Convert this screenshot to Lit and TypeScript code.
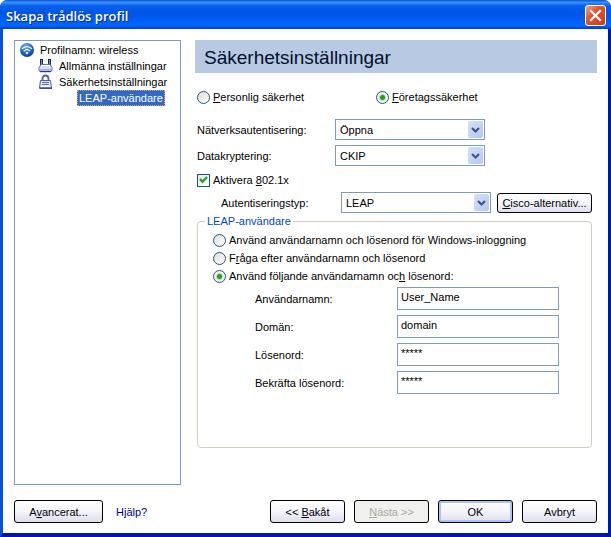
import { LitElement, html, css, svg } from "lit";
import { customElement, property, state } from "lit/decorators.js";

const globeIcon = html`<svg class="icon" viewBox="0 0 16 16" width="16" height="16" aria-hidden="true">
  <defs>
    <radialGradient id="globe" cx="0.4" cy="0.25" r="0.8">
      <stop offset="0" stop-color="#6fb0f0" />
      <stop offset="0.55" stop-color="#2468c8" />
      <stop offset="1" stop-color="#10388c" />
    </radialGradient>
  </defs>
  <circle cx="7" cy="8" r="7" fill="url(#globe)" />
  <g fill="none" stroke="#e4f0fc" stroke-width="1.3" stroke-linecap="round">
    <path d="M2.400 6.600Q7 2.600 11.600 6.600" />
    <path d="M4.200 8.900Q7 6.200 9.800 8.900" />
  </g>
  <circle cx="7" cy="11" r="1.300" fill="#e4f0fc" />
</svg>`;

const adapterIcon = html`<svg class="icon" viewBox="0 0 16 16" width="16" height="16" aria-hidden="true">
  <path d="M3.500 1v6M11.500 1v6" stroke="#1c2560" stroke-width="3" />
  <path d="M3.500 2v5M11.500 2v5" stroke="#7c88d0" stroke-width="1" />
  <path d="M3 6.500h9l2 3v2.500q0 1.500-1.500 1.500h-10Q1 13.500 1 12V9.500z" fill="#d8def6" stroke="#6470b8" />
  <path d="M3 7.500h9" stroke="#fff" />
  <path d="M2 11.500h11" stroke="#a4b0e4" />
  <path d="M2 13.500h11" stroke="#2c3880" stroke-width="1.400" />
</svg>`;

const lockIcon = html`<svg class="icon" viewBox="0 0 16 16" width="16" height="16" aria-hidden="true">
  <path d="M4.500 7V5Q4.500 1.500 7.500 1.500T10.500 5V7" fill="none" stroke="#5562a8" stroke-width="1.800" />
  <path d="M2.500 6.500h10l1 7.500h-12z" fill="#e6ebfb" stroke="#4c5cb0" />
  <path d="M4 8.500h7M4 10.500h7" stroke="#5a68b0" />
  <path d="M3 12.500h9" stroke="#fff" />
  <path d="M1.500 14.200h12.500" stroke="#303c8c" stroke-width="1.300" />
</svg>`;

const closeIcon = html`<svg viewBox="0 0 19 19" width="19" height="19" aria-hidden="true">
  <path d="M5 5l9 9M14 5l-9 9" stroke="#fff" stroke-width="2.200" stroke-linecap="square" />
</svg>`;

/** Text with one underlined access key, written as "_" before the letter. */
function mnemonic(text: string) {
  const at = text.indexOf("_");
  if (at < 0) return html`${text}`;
  return html`<span>${text.slice(0, at)}<u>${text[at + 1]}</u>${text.slice(at + 2)}</span>`;
}

@customElement("xp-select")
export class XpSelect extends LitElement {
  @property() label = "";
  @property({ type: Array }) options: string[] = [];

  static styles = css`
    :host { display: block; position: relative; }
    select {
      appearance: none;
      display: block;
      box-sizing: border-box;
      width: 100%;
      height: 21px;
      margin: 0;
      padding: 0 20px 0 4px;
      border: 1px solid #7f9db9;
      border-radius: 0;
      background: #fff;
      color: #000;
      font: inherit;
      outline: none;
    }
    .arrow {
      position: absolute;
      top: 2px;
      right: 2px;
      width: 15px;
      height: 17px;
      border-radius: 2px;
      background: linear-gradient(135deg, #d5e1fb, #b2c8f5);
      pointer-events: none;
    }
    svg { display: block; }
  `;

  render() {
    return html`<select aria-label=${this.label}>
        ${this.options.map((o) => html`<option>${o}</option>`)}
      </select>
      <span class="arrow">
        <svg viewBox="0 0 15 17" width="15" height="17" aria-hidden="true">
          ${svg`<path d="M4 7l3.500 3.500L11 7" fill="none" stroke="#40567f" stroke-width="2.200" />`}
        </svg>
      </span>`;
  }
}

@customElement("app-root")
export class AppRoot extends LitElement {
  @state() private security = "enterprise";
  @state() private login = "fixed";

  static styles = css`
    :host {
      display: block;
      color: #000;
      font: 11px/16px "Liberation Sans", Arial, sans-serif;
    }
    * { box-sizing: border-box; }
    .window {
      display: flex;
      flex-direction: column;
      min-height: 100vh;
      background: #fff;
      border: solid;
      border-width: 0 3px 4px;
      border-color: #0a2fc4 #0019a8 #0019a8 #0a50e0;
      border-radius: 8px 8px 0 0;
    }
    .titlebar {
      display: flex;
      align-items: center;
      justify-content: space-between;
      height: 29px;
      margin: 0 -3px;
      padding: 2px 5px 0 6px;
      border-radius: 7px 7px 0 0;
      background: linear-gradient(#0a4fd0, #3a90ff 8%, #0560ee 20%, #0054e3 45%, #0060f8 75%, #0466ff 88%, #003dd0);
    }
    .titlebar h1 {
      margin: 0;
      color: #fff;
      font: 600 13px/20px "Open Sans", "Noto Sans", sans-serif;
      text-shadow: 1px 1px 0 #0a2a8c;
    }
    .close {
      width: 21px;
      height: 21px;
      padding: 0;
      border: 1px solid #fff;
      border-radius: 3px;
      background: linear-gradient(135deg, #f0a088, #e2552c 40%, #c83c14);
    }
    .close svg { display: block; }
    .body {
      flex: 1;
      display: flex;
      gap: 14px;
      padding: 11px 11px 0;
    }
    .tree {
      flex: 0 0 167px;
      border: 1px solid #7f9db9;
      padding: 1px 0 0 5px;
      margin: 0;
      list-style: none;
    }
    .tree li {
      display: flex;
      align-items: center;
      gap: 4px;
      height: 16px;
      white-space: nowrap;
    }
    .tree .level1 { padding-left: 18px; gap: 5px; }
    .level2 { padding-left: 57px; }
    .selected {
      padding: 0 2px;
      outline: 1px dotted #d8a060;
      outline-offset: -1px;
      background: #316ac5;
      color: #fff;
    }
    .icon { flex: none; display: block; }
    .main { flex: 1; min-width: 0; }
    .banner {
      margin: 0;
      height: 33px;
      padding-left: 9px;
      background: #b8c9e3;
      color: #00102c;
      font: 19px/35px "Liberation Sans", Arial, sans-serif;
    }
    .form { padding: 0 5px 0 2px; }
    .choices {
      display: grid;
      grid-template-columns: 179px 1fr;
      padding-top: 16px;
    }
    label { display: flex; align-items: center; white-space: nowrap; }
    input { margin: 0; outline: none; }
    input[type="radio"] {
      appearance: none;
      flex: none;
      width: 13px;
      height: 13px;
      margin-right: 3px;
      border: 1px solid #2a5582;
      border-radius: 50%;
      background: linear-gradient(135deg, #dcdcd7, #fff);
    }
    input[type="radio"]:checked {
      background: radial-gradient(circle, #21a121 0 2px, #b8e0b4 3px, #f4f4f2 4px);
    }
    .tick { position: relative; margin-top: 6px; height: 16px; }
    .tick input {
      appearance: none;
      width: 13px;
      height: 13px;
      margin-right: 3px;
      border: 1px solid #1c5180;
      background: linear-gradient(135deg, #e6e6e2, #fff);
    }
    .tick svg { position: absolute; left: 0; top: 1px; pointer-events: none; }
    .field {
      display: grid;
      grid-template-columns: 138px 150px;
      align-items: center;
    }
    .first { margin-top: 14px; }
    .next { margin-top: 5px; }
    .auth {
      display: grid;
      grid-template-columns: 120px 150px 1fr;
      align-items: center;
      margin-top: 4px;
      padding-left: 24px;
    }
    button { font: inherit; color: #000; }
    .btn {
      height: 23px;
      padding: 0;
      border: 1px solid #000;
      border-radius: 3px;
      background: linear-gradient(#fff, #f4f4fb 50%, #dedeee);
      white-space: nowrap;
    }
    .cisco { height: 20px; margin-left: 6px; }
    fieldset {
      min-width: 0;
      height: 235px;
      margin: 0;
      padding: 2px 0 0 15px;
      border: 1px solid #d0d0bf;
      border-radius: 4px;
    }
    legend {
      margin-left: -8px;
      padding: 0 2px;
      color: #0046d5;
    }
    fieldset > label { height: 18px; }
    .credentials {
      display: grid;
      grid-template-columns: 142px 162px;
      row-gap: 5px;
      padding: 2px 0 0 42px;
    }
    .credentials input {
      width: 100%;
      height: 23px;
      padding: 0 3px 3px;
      border: 1px solid #7f9db9;
      background: #fff;
      color: #000;
      font: inherit;
    }
    .footer {
      display: grid;
      grid-template-columns: 89px 1fr repeat(4, 75px);
      column-gap: 9px;
      align-items: center;
      padding: 15px 11px 10px;
    }
    .footer a { margin-left: 4px; color: #0000a0; text-decoration: none; }
    .footer .btn:disabled {
      background: #f0f0ee;
      color: #a8a899;
      border-color: #000;
    }
    .footer .default { box-shadow: inset 0 0 0 2px #a9c4f5; }
  `;

  private loginRadio(value: string, text: string) {
    return html`<label>
      <input type="radio" name="login" .checked=${this.login === value}
        @change=${() => (this.login = value)} />${mnemonic(text)}
    </label>`;
  }

  private credential(id: string, label: string, value: string) {
    return html`<label for=${id}>${label}</label><input id=${id} type="text" .value=${value} />`;
  }

  render() {
    return html`<div class="window">
      <header class="titlebar">
        <h1>Skapa trådlös profil</h1>
        <button class="close" aria-label="Stäng">${closeIcon}</button>
      </header>
      <div class="body">
        <ul class="tree">
          <li>${globeIcon}Profilnamn: wireless</li>
          <li class="level1">${adapterIcon}Allmänna inställningar</li>
          <li class="level1">${lockIcon}Säkerhetsinställningar</li>
          <li class="level2"><span class="selected">LEAP-användare</span></li>
        </ul>
        <main class="main">
          <h2 class="banner">Säkerhetsinställningar</h2>
          <div class="form">
            <div class="choices">
              <label><input type="radio" name="security" .checked=${this.security === "personal"}
                @change=${() => (this.security = "personal")} />${mnemonic("_Personlig säkerhet")}</label>
              <label><input type="radio" name="security" .checked=${this.security === "enterprise"}
                @change=${() => (this.security = "enterprise")} />${mnemonic("_Företagssäkerhet")}</label>
            </div>
            <div class="field first">
              <span>Nätverksautentisering:</span>
              <xp-select label="Nätverksautentisering" .options=${["Öppna"]}></xp-select>
            </div>
            <div class="field next">
              <span>Datakryptering:</span>
              <xp-select label="Datakryptering" .options=${["CKIP"]}></xp-select>
            </div>
            <label class="tick">
              <input type="checkbox" checked />
              <svg viewBox="0 0 13 13" width="13" height="13" aria-hidden="true">
                <path d="M3 6l2.500 2.800L10 4" fill="none" stroke="#21a121" stroke-width="2.200" />
              </svg>
              ${mnemonic("Aktivera _802.1x")}
            </label>
            <div class="auth">
              <span>Autentiseringstyp:</span>
              <xp-select label="Autentiseringstyp" .options=${["LEAP"]}></xp-select>
              <button class="btn cisco">${mnemonic("_Cisco-alternativ...")}</button>
            </div>
            <fieldset>
              <legend>LEAP-användare</legend>
              ${this.loginRadio("windows", "Använd användarnamn och lösenord för Windows-inloggning")}
              ${this.loginRadio("prompt", "F_råga efter användarnamn och lösenord")}
              ${this.loginRadio("fixed", "Använd följande användarnamn oc_h lösenord:")}
              <div class="credentials">
                ${this.credential("user", "Användarnamn:", "User_Name")}
                ${this.credential("domain", "Domän:", "domain")}
                ${this.credential("password", "Lösenord:", "*****")}
                ${this.credential("confirm", "Bekräfta lösenord:", "*****")}
              </div>
            </fieldset>
          </div>
        </main>
      </div>
      <footer class="footer">
        <button class="btn">${mnemonic("A_vancerat...")}</button>
        <a href="#help">Hjälp?</a>
        <button class="btn">${mnemonic("<< _Bakåt")}</button>
        <button class="btn" disabled>${mnemonic("_Nästa >>")}</button>
        <button class="btn default">OK</button>
        <button class="btn">Avbryt</button>
      </footer>
    </div>`;
  }
}
